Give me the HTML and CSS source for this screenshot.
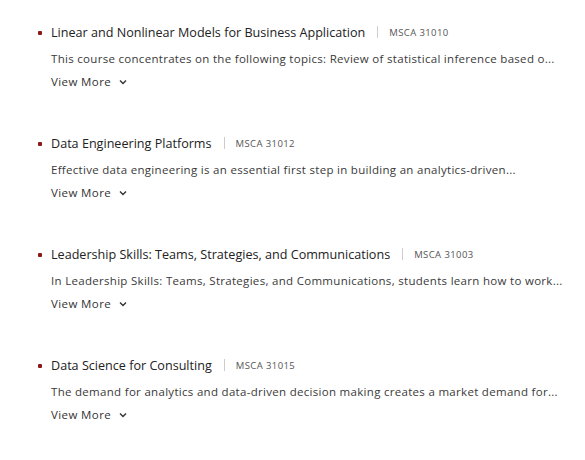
FILE: index.html
```html
<!DOCTYPE html>
<html>
  <head>
    <title>Courses</title>
    <meta charset="UTF-8">
    <link rel="stylesheet" href="styles.css">
  </head>
  <body>
    <ul class="courses">
      <li class="course">
        <div class="course-head">
          <span class="course-title">Linear and Nonlinear Models for Business Application</span>
          <span class="sep"></span>
          <span class="course-code">MSCA 31010</span>
        </div>
        <p class="course-desc">This course concentrates on the following topics: Review of statistical inference based o...</p>
        <a class="more" href="#">View More <svg width="8" height="6" viewBox="0 0 8 6"><path d="M1 1.5 4 4.5 7 1.5" fill="none" stroke="#333" stroke-width="1.4"/></svg></a>
      </li>
      <li class="course">
        <div class="course-head">
          <span class="course-title">Data Engineering Platforms</span>
          <span class="sep"></span>
          <span class="course-code">MSCA 31012</span>
        </div>
        <p class="course-desc">Effective data engineering is an essential first step in building an analytics-driven...</p>
        <a class="more" href="#">View More <svg width="8" height="6" viewBox="0 0 8 6"><path d="M1 1.5 4 4.5 7 1.5" fill="none" stroke="#333" stroke-width="1.4"/></svg></a>
      </li>
      <li class="course">
        <div class="course-head">
          <span class="course-title">Leadership Skills: Teams, Strategies, and Communications</span>
          <span class="sep"></span>
          <span class="course-code">MSCA 31003</span>
        </div>
        <p class="course-desc">In Leadership Skills: Teams, Strategies, and Communications, students learn how to work...</p>
        <a class="more" href="#">View More <svg width="8" height="6" viewBox="0 0 8 6"><path d="M1 1.5 4 4.5 7 1.5" fill="none" stroke="#333" stroke-width="1.4"/></svg></a>
      </li>
      <li class="course">
        <div class="course-head">
          <span class="course-title">Data Science for Consulting</span>
          <span class="sep"></span>
          <span class="course-code">MSCA 31015</span>
        </div>
        <p class="course-desc">The demand for analytics and data-driven decision making creates a market demand for...</p>
        <a class="more" href="#">View More <svg width="8" height="6" viewBox="0 0 8 6"><path d="M1 1.5 4 4.5 7 1.5" fill="none" stroke="#333" stroke-width="1.4"/></svg></a>
      </li>
    </ul>
  </body>
</html>
```

FILE: styles.css
```css
body {
  margin: 0;
  background: #fff;
  font-family: 'Open Sans', sans-serif;
  color: #333;
}
.courses {
  list-style: none;
  margin: 0;
  padding: 22px 0 0 51px;
}
.course {
  position: relative;
  height: 111px;
}
.course:before {
  content: "";
  position: absolute;
  left: -13px;
  top: 9px;
  width: 4px;
  height: 4px;
  border-radius: 1px;
  background: #8a1a1a;
}
.course-head {
  display: flex;
  align-items: center;
  height: 20px;
}
.course-title {
  font-size: 12.6px;
  color: #222;
}
.sep {
  width: 1px;
  height: 12px;
  background: #ccc;
  margin: 0 11px 0 12px;
}
.course-code {
  font-size: 9.5px;
  color: #555;
  letter-spacing: 0.4px;
}
.course-desc {
  margin: 7px 0 0;
  font-size: 11.5px;
  letter-spacing: 0.3px;
  line-height: 20px;
  color: #3a3a3a;
  white-space: nowrap;
}
.more {
  display: flex;
  align-items: center;
  gap: 8px;
  margin-top: 3px;
  font-size: 11.5px;
  letter-spacing: 0.4px;
  line-height: 20px;
  color: #333;
  text-decoration: none;
}
```
